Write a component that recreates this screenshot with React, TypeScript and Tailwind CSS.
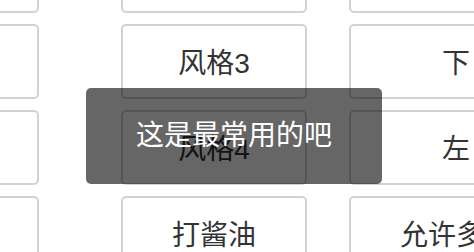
import React from "react";

const columns = [
  { width: "w-[186px]", items: ["基本", "成功", "失败", "加载"] },
  { width: "w-[186px]", items: ["风格2", "风格3", "风格4", "打酱油"] },
  { width: "w-[214px]", items: ["上", "下", "左", "允许多选"] },
];

const App = () => {
  return (
    <div
      className="relative w-[474px] h-[252px] overflow-hidden bg-white"
      style={{ fontFamily: '"Liberation Sans", "Noto Sans CJK SC", sans-serif' }}
    >
      {/* Button grid (scrolled, partly out of view) */}
      <div className="flex mt-[-62px] ml-[-147px]">
        {columns.map((col, ci) => (
          <div
            key={ci}
            className={`flex flex-col gap-[11px] shrink-0 ${col.width} ${
              ci === 1 ? "ml-[82px]" : ci === 2 ? "ml-[42px]" : ""
            }`}
          >
            {col.items.map((label) => (
              <button
                key={label}
                className="h-[75px] shrink-0 flex items-center justify-center pt-[5px] border-2 border-[#d2d2d2] rounded-[5px] bg-white text-[28px] text-[#333] whitespace-nowrap overflow-hidden"
              >
                {label}
              </button>
            ))}
          </div>
        ))}
      </div>

      {/* Toast */}
      <div className="absolute left-[86px] top-[88px] w-[296px] h-[96px] rounded-[5px] bg-black/60 flex items-center justify-center">
        <span className="text-[28px] text-white leading-none">这是最常用的吧</span>
      </div>
    </div>
  );
};

export default App;
